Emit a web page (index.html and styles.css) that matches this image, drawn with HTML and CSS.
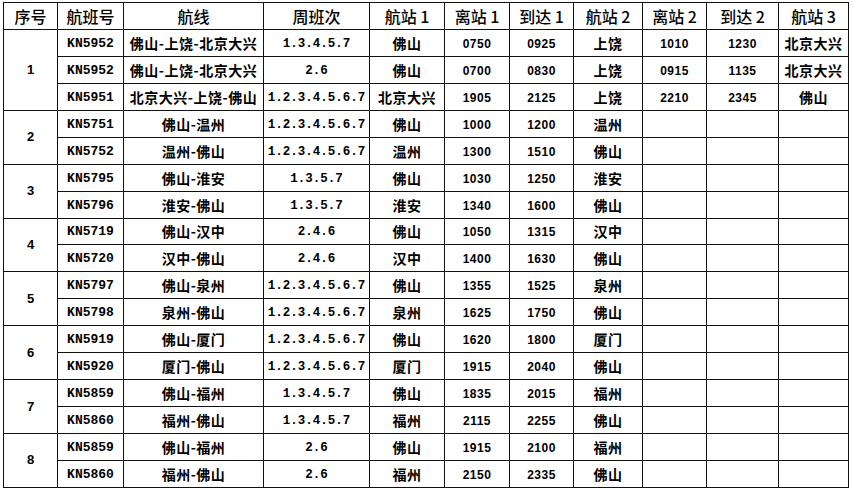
FILE: index.html
```html
<!DOCTYPE html>
<html lang="zh-CN">
<head>
<meta charset="utf-8">
<title>航班计划</title>
<link rel="stylesheet" href="styles.css">
</head>
<body>
<table class="sched">
<colgroup>
<col class="c1"><col class="c2"><col class="c3"><col class="c4"><col class="c5"><col class="c6"><col class="c7"><col class="c8"><col class="c9"><col class="c10"><col class="c11">
</colgroup>
<thead>
<tr><th>序号</th><th>航班号</th><th>航线</th><th>周班次</th><th>航站 1</th><th>离站 1</th><th>到达 1</th><th>航站 2</th><th>离站 2</th><th>到达 2</th><th>航站 3</th></tr>
</thead>
<tbody>
<tr><td class="num" rowspan="3">1</td><td class="fl">KN5952</td><td class="cn">佛山-上饶-北京大兴</td><td class="wk">1.3.4.5.7</td><td class="cn">佛山</td><td class="tm">0750</td><td class="tm">0925</td><td class="cn">上饶</td><td class="tm">1010</td><td class="tm">1230</td><td class="cn">北京大兴</td></tr>
<tr><td class="fl">KN5952</td><td class="cn">佛山-上饶-北京大兴</td><td class="wk">2.6</td><td class="cn">佛山</td><td class="tm">0700</td><td class="tm">0830</td><td class="cn">上饶</td><td class="tm">0915</td><td class="tm">1135</td><td class="cn">北京大兴</td></tr>
<tr><td class="fl">KN5951</td><td class="cn">北京大兴-上饶-佛山</td><td class="wk">1.2.3.4.5.6.7</td><td class="cn">北京大兴</td><td class="tm">1905</td><td class="tm">2125</td><td class="cn">上饶</td><td class="tm">2210</td><td class="tm">2345</td><td class="cn">佛山</td></tr>

<tr><td class="num" rowspan="2">2</td><td class="fl">KN5751</td><td class="cn">佛山-温州</td><td class="wk">1.2.3.4.5.6.7</td><td class="cn">佛山</td><td class="tm">1000</td><td class="tm">1200</td><td class="cn">温州</td><td></td><td></td><td></td></tr>
<tr><td class="fl">KN5752</td><td class="cn">温州-佛山</td><td class="wk">1.2.3.4.5.6.7</td><td class="cn">温州</td><td class="tm">1300</td><td class="tm">1510</td><td class="cn">佛山</td><td></td><td></td><td></td></tr>

<tr><td class="num" rowspan="2">3</td><td class="fl">KN5795</td><td class="cn">佛山-淮安</td><td class="wk">1.3.5.7</td><td class="cn">佛山</td><td class="tm">1030</td><td class="tm">1250</td><td class="cn">淮安</td><td></td><td></td><td></td></tr>
<tr><td class="fl">KN5796</td><td class="cn">淮安-佛山</td><td class="wk">1.3.5.7</td><td class="cn">淮安</td><td class="tm">1340</td><td class="tm">1600</td><td class="cn">佛山</td><td></td><td></td><td></td></tr>

<tr><td class="num" rowspan="2">4</td><td class="fl">KN5719</td><td class="cn">佛山-汉中</td><td class="wk">2.4.6</td><td class="cn">佛山</td><td class="tm">1050</td><td class="tm">1315</td><td class="cn">汉中</td><td></td><td></td><td></td></tr>
<tr><td class="fl">KN5720</td><td class="cn">汉中-佛山</td><td class="wk">2.4.6</td><td class="cn">汉中</td><td class="tm">1400</td><td class="tm">1630</td><td class="cn">佛山</td><td></td><td></td><td></td></tr>

<tr><td class="num" rowspan="2">5</td><td class="fl">KN5797</td><td class="cn">佛山-泉州</td><td class="wk">1.2.3.4.5.6.7</td><td class="cn">佛山</td><td class="tm">1355</td><td class="tm">1525</td><td class="cn">泉州</td><td></td><td></td><td></td></tr>
<tr><td class="fl">KN5798</td><td class="cn">泉州-佛山</td><td class="wk">1.2.3.4.5.6.7</td><td class="cn">泉州</td><td class="tm">1625</td><td class="tm">1750</td><td class="cn">佛山</td><td></td><td></td><td></td></tr>

<tr><td class="num" rowspan="2">6</td><td class="fl">KN5919</td><td class="cn">佛山-厦门</td><td class="wk">1.2.3.4.5.6.7</td><td class="cn">佛山</td><td class="tm">1620</td><td class="tm">1800</td><td class="cn">厦门</td><td></td><td></td><td></td></tr>
<tr><td class="fl">KN5920</td><td class="cn">厦门-佛山</td><td class="wk">1.2.3.4.5.6.7</td><td class="cn">厦门</td><td class="tm">1915</td><td class="tm">2040</td><td class="cn">佛山</td><td></td><td></td><td></td></tr>

<tr><td class="num" rowspan="2">7</td><td class="fl">KN5859</td><td class="cn">佛山-福州</td><td class="wk">1.3.4.5.7</td><td class="cn">佛山</td><td class="tm">1835</td><td class="tm">2015</td><td class="cn">福州</td><td></td><td></td><td></td></tr>
<tr><td class="fl">KN5860</td><td class="cn">福州-佛山</td><td class="wk">1.3.4.5.7</td><td class="cn">福州</td><td class="tm">2115</td><td class="tm">2255</td><td class="cn">佛山</td><td></td><td></td><td></td></tr>

<tr><td class="num" rowspan="2">8</td><td class="fl">KN5859</td><td class="cn">佛山-福州</td><td class="wk">2.6</td><td class="cn">佛山</td><td class="tm">1915</td><td class="tm">2100</td><td class="cn">福州</td><td></td><td></td><td></td></tr>
<tr><td class="fl">KN5860</td><td class="cn">福州-佛山</td><td class="wk">2.6</td><td class="cn">福州</td><td class="tm">2150</td><td class="tm">2335</td><td class="cn">佛山</td><td></td><td></td><td></td></tr>
</tbody>
</table>
</body>
</html>
```

FILE: styles.css
```css
html, body {
  margin: 0;
  padding: 0;
  background: #ffffff;
}

body {
  padding: 2px 0 0 3px;
  font-family: "Noto Sans CJK SC", "DejaVu Sans", sans-serif;
  color: #000000;
}

.sched {
  border-collapse: collapse;
  table-layout: fixed;
  width: 845px;
}

.c1 { width: 54px; }
.c2 { width: 66px; }
.c3 { width: 140px; }
.c4 { width: 106px; }
.c5 { width: 75px; }
.c6 { width: 65px; }
.c7 { width: 64px; }
.c8 { width: 69px; }
.c9 { width: 64px; }
.c10 { width: 72px; }
.c11 { width: 70px; }

.sched th,
.sched td {
  border: 1px solid #111111;
  height: 25.95px;
  padding: 0;
  text-align: center;
  vertical-align: middle;
  white-space: nowrap;
  overflow: hidden;
  line-height: 14px;
}

.sched th {
  font-family: "Noto Sans CJK SC", sans-serif;
  font-size: 16px;
  font-weight: 500;
  line-height: 16px;
}

.sched td.cn {
  font-family: "Noto Sans CJK SC", sans-serif;
  font-size: 14px;
  font-weight: 700;
  letter-spacing: 0.5px;
}

.sched td.fl,
.sched td.wk,
.sched td.tm {
  height: 23.95px;
  padding-top: 2px;
}

.sched td.fl {
  font-family: "Liberation Mono", "DejaVu Sans Mono", monospace;
  font-size: 13px;
  font-weight: 700;
}

.sched td.wk {
  font-family: "Liberation Mono", "DejaVu Sans Mono", monospace;
  font-size: 12.5px;
  font-weight: 700;
}

.sched td.tm {
  font-family: "Liberation Sans", Arial, sans-serif;
  font-size: 12px;
  font-weight: 700;
  letter-spacing: 0.5px;
}

.sched td.num {
  font-family: "Liberation Sans", Arial, sans-serif;
  font-size: 13px;
  font-weight: 700;
}
```
